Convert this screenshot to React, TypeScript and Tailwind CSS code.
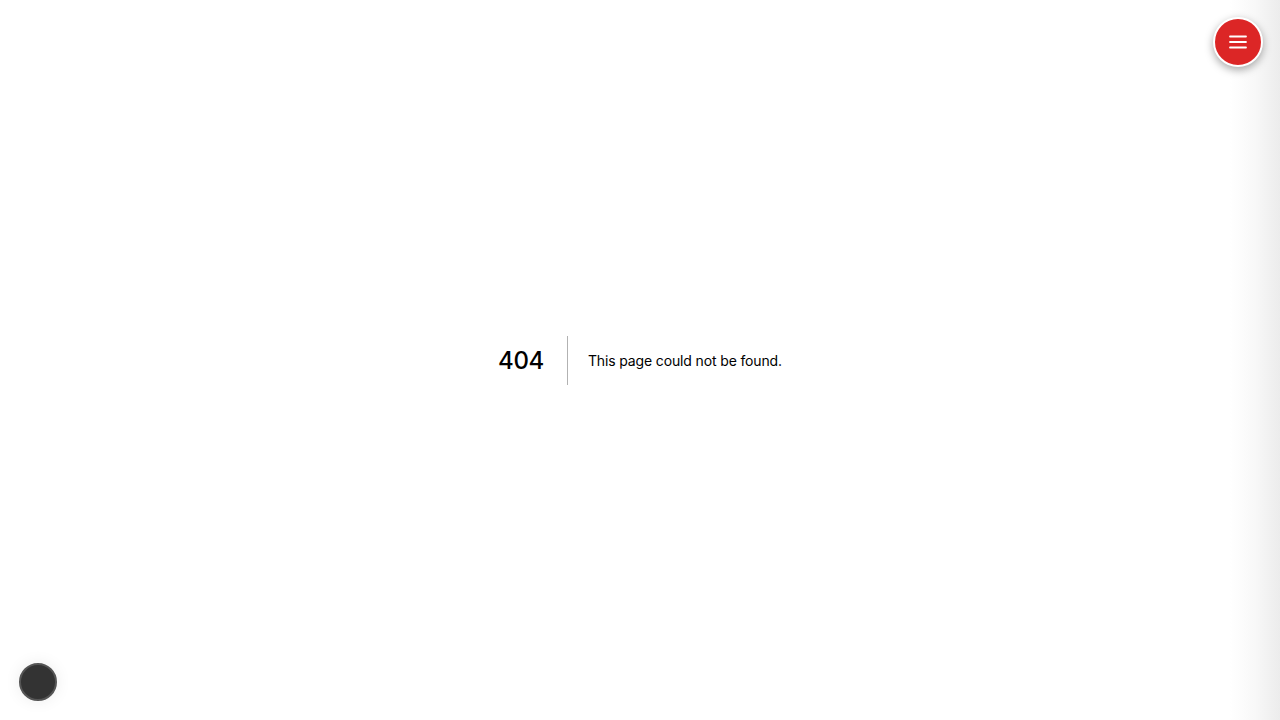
import React from "react";

export default function App() {
  return (
    <div
      className="relative h-[720px] w-full overflow-hidden bg-white text-black"
      style={{ fontFamily: "Inter, 'Noto Sans', sans-serif" }}
    >
      <div className="flex h-full flex-col items-center justify-center text-center">
        <div className="flex items-center">
          <h1 className="mr-5 border-r border-black/30 pr-[23px] text-[24px] font-medium leading-[49px] tracking-[-0.015em]">
            404
          </h1>
          <h2 className="text-[14px] font-normal leading-[49px] tracking-[-0.01em]">This page could not be found.</h2>
        </div>
      </div>

      <div className="pointer-events-none absolute right-0 top-0 h-full w-[50px] bg-gradient-to-r from-white/0 via-[#f8f8f8] to-[#ececec]" />

      <button className="absolute right-[17px] top-[17px] flex h-[50px] w-[50px] items-center justify-center rounded-full border-2 border-white bg-[#dc2626] shadow-[0_3px_8px_rgba(0,0,0,0.35)]">
        <svg width="18" height="14" viewBox="0 0 18 14" fill="none" stroke="white" strokeWidth="1.8" strokeLinecap="round">
          <path d="M1 1.5h16M1 7h16M1 12.5h16" />
        </svg>
      </button>

      <div className="absolute bottom-[19px] left-[19px] h-[38px] w-[38px] rounded-full border-2 border-[#555] bg-[#333] shadow-[0_0_16px_rgba(0,0,0,0.08)]" />
    </div>
  );
}
